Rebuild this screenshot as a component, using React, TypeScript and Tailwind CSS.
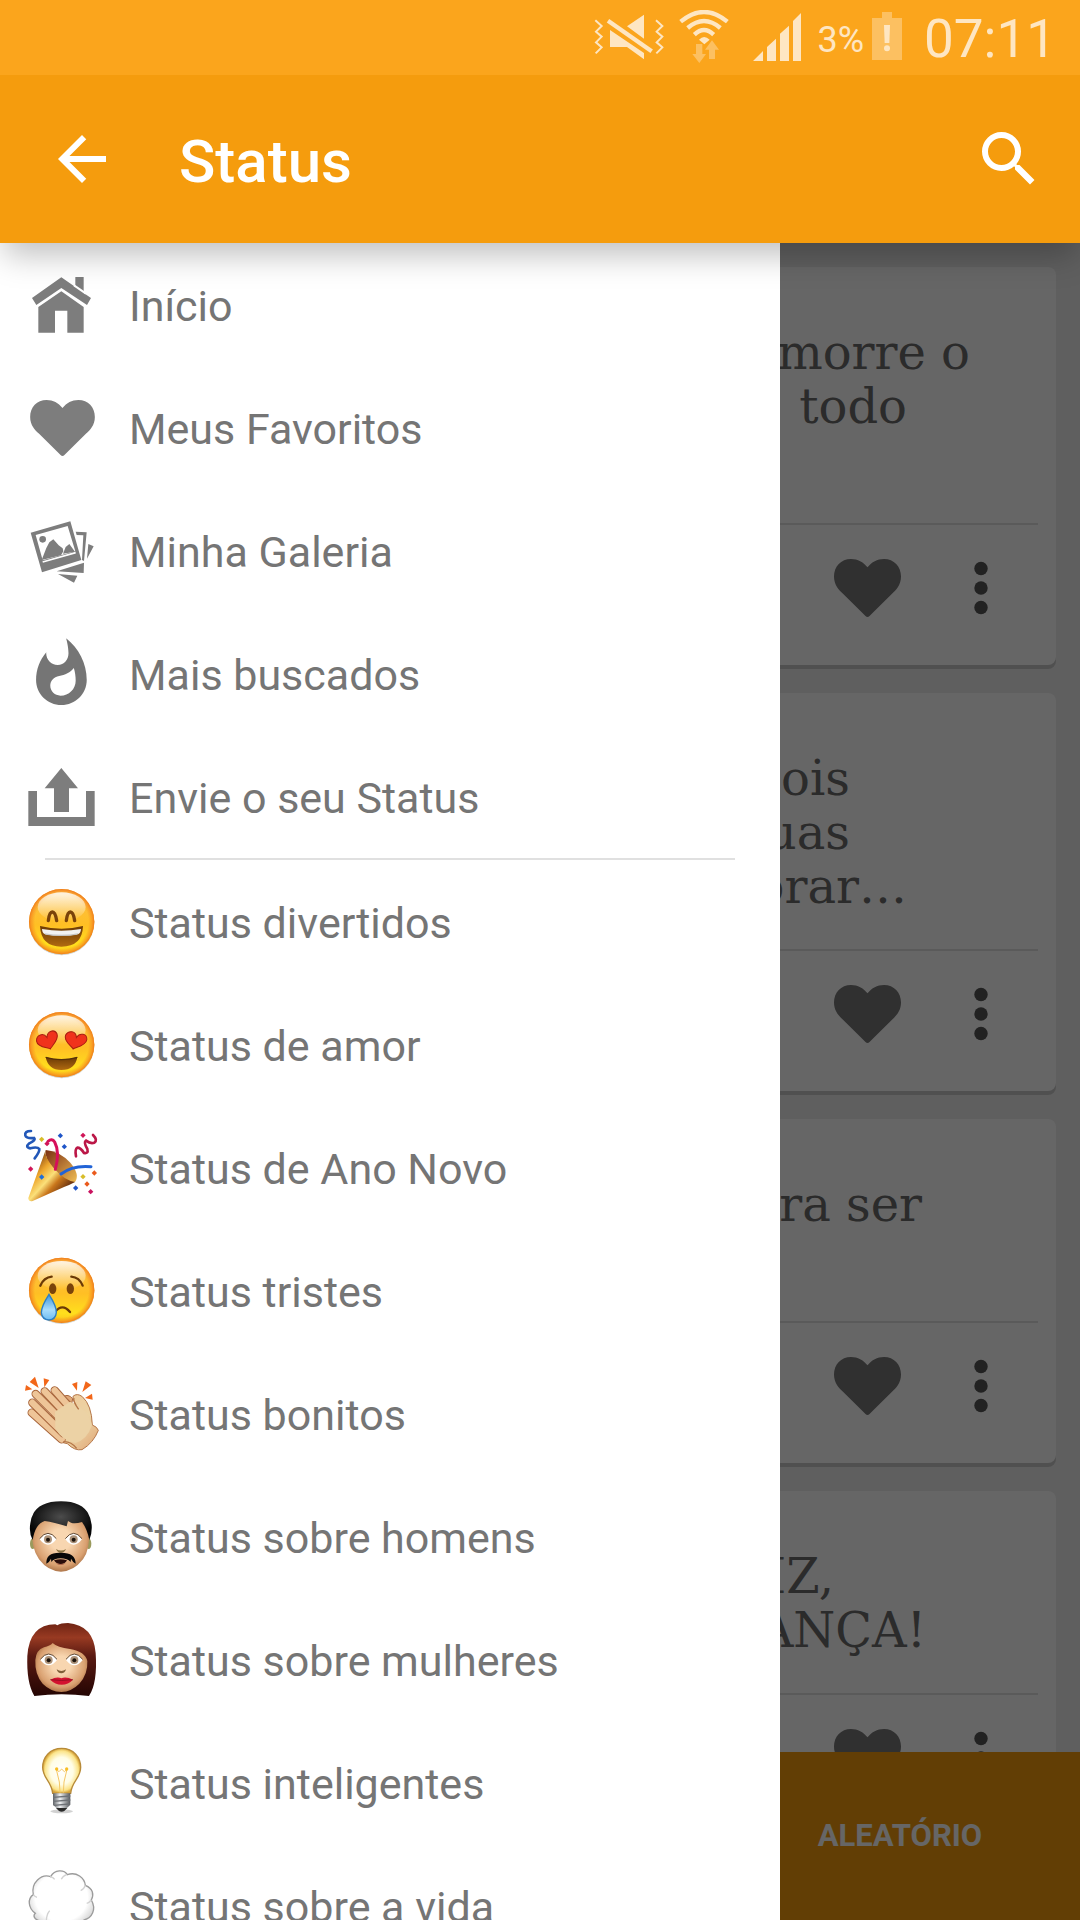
import type { ReactNode } from "react";
import { MdArrowBack, MdSearch } from "react-icons/md";

interface IconProps {
  viewBox: string;
  children: ReactNode;
}

function MenuIcon({ viewBox, children }: IconProps) {
  return (
    <svg viewBox={viewBox} className="h-[83px] w-[84px] shrink-0 text-[#7d7d7d]" fill="currentColor" aria-hidden="true">
      {children}
    </svg>
  );
}

function HeartIcon({ className }: { className: string }) {
  return (
    <svg viewBox="0 0 67 58" className={className} fill="currentColor" aria-hidden="true">
      <path d="M33.5 8.3C29 3 24 0 17 0 7 0 0 7.5 0 17.5 0 26 5 31 9 34.8L31.5 57q2 1.8 4 0L58 34.8C62 31 67 26 67 17.5 67 7.5 60 0 50 0c-7 0-12 3-16.5 8.300z" />
    </svg>
  );
}

function Gradients() {
  return (
    <svg className="absolute size-0" aria-hidden="true">
      <defs>
        <linearGradient id="face" x1="0" y1="0" x2="0" y2="1">
          <stop offset="0" stopColor="#fdc04d" />
          <stop offset="0.55" stopColor="#ffbf24" />
          <stop offset="0.85" stopColor="#ffdf1d" />
          <stop offset="1" stopColor="#fbc31c" />
        </linearGradient>
        <radialGradient id="rim">
          <stop offset="0.82" stopColor="#f5881f" stopOpacity="0" />
          <stop offset="0.93" stopColor="#f5881f" stopOpacity="0.6" />
          <stop offset="1" stopColor="#ee7a1c" />
        </radialGradient>
        <linearGradient id="gloss" x1="0" y1="0" x2="0" y2="1">
          <stop offset="0" stopColor="#fff" stopOpacity="0.85" />
          <stop offset="1" stopColor="#fff" stopOpacity="0" />
        </linearGradient>
        <linearGradient id="mouth" x1="0" y1="0" x2="0" y2="1">
          <stop offset="0" stopColor="#6b3a06" />
          <stop offset="1" stopColor="#b06a10" />
        </linearGradient>
        <linearGradient id="tear" x1="0" y1="0" x2="0" y2="1">
          <stop offset="0" stopColor="#3a93dc" />
          <stop offset="0.6" stopColor="#a8dcfb" />
          <stop offset="1" stopColor="#6fbdf2" />
        </linearGradient>
        <linearGradient id="cone" x1="0" y1="0" x2="1" y2="1">
          <stop offset="0.1" stopColor="#5e2410" />
          <stop offset="0.35" stopColor="#eda52b" />
          <stop offset="0.5" stopColor="#fbe07a" />
          <stop offset="0.62" stopColor="#c9761b" />
          <stop offset="0.85" stopColor="#4a1c0c" />
        </linearGradient>
        <linearGradient id="coneInside" x1="0" y1="0" x2="1" y2="1">
          <stop offset="0" stopColor="#7a2f12" />
          <stop offset="1" stopColor="#f0bd55" />
        </linearGradient>
        <linearGradient id="hand" x1="0" y1="0" x2="1" y2="1">
          <stop offset="0" stopColor="#f0c596" />
          <stop offset="0.6" stopColor="#ecd3a4" />
          <stop offset="1" stopColor="#e0a474" />
        </linearGradient>
        <radialGradient id="skin" cx="0.5" cy="0.45" r="0.6">
          <stop offset="0.3" stopColor="#f8d6b0" />
          <stop offset="0.75" stopColor="#d9a070" />
          <stop offset="1" stopColor="#9a6238" />
        </radialGradient>
        <radialGradient id="blackHair" cx="0.5" cy="0.4" r="0.55">
          <stop offset="0" stopColor="#4c4c4c" />
          <stop offset="1" stopColor="#050505" />
        </radialGradient>
        <linearGradient id="redHair" x1="0" y1="0" x2="0" y2="1">
          <stop offset="0" stopColor="#6f2414" />
          <stop offset="0.2" stopColor="#983a22" />
          <stop offset="0.45" stopColor="#5a1a12" />
          <stop offset="1" stopColor="#240503" />
        </linearGradient>
        <radialGradient id="glow" cx="0.5" cy="0.5" r="0.5">
          <stop offset="0" stopColor="#fff" />
          <stop offset="0.6" stopColor="#fffde6" />
          <stop offset="0.88" stopColor="#fbe48a" />
          <stop offset="1" stopColor="#d9a63c" />
        </radialGradient>
        <linearGradient id="metal" x1="0" y1="0" x2="1" y2="0">
          <stop offset="0" stopColor="#5d6166" />
          <stop offset="0.4" stopColor="#eef0f2" />
          <stop offset="1" stopColor="#55585c" />
        </linearGradient>
        <radialGradient id="cloud" cx="0.5" cy="0.45" r="0.58">
          <stop offset="0.7" stopColor="#fff" />
          <stop offset="1" stopColor="#cfcfcf" />
        </radialGradient>
      </defs>
    </svg>
  );
}

function Face({ cy }: { cy: number }) {
  return (
    <>
      <circle cx="185" cy={cy + 3} r="98" fill="#000" opacity="0.18" />
      <circle cx="185" cy={cy} r="98" fill="url(#face)" />
      <circle cx="185" cy={cy} r="98" fill="url(#rim)" />
      <ellipse cx="185" cy={cy - 44} rx="72" ry="44" fill="url(#gloss)" />
    </>
  );
}

function Eye({ cx, cy }: { cx: number; cy: number }) {
  return (
    <>
      <path d="M-25 0q12-17 25-17t25 17q-12 16-25 16t-25-16z" transform={`translate(${cx} ${cy})`} fill="#fff" />
      <circle cx={cx} cy={cy} r="12" fill="#ab9178" />
      <circle cx={cx} cy={cy + 1} r="6" fill="#1c130c" />
      <path d="M-25-2q12-16 25-16t25 16" transform={`translate(${cx} ${cy})`} fill="none" stroke="#5f4a38" strokeWidth="3" />
    </>
  );
}

const HomeIcon = () => (
  <MenuIcon viewBox="60 609 252 249">
    <path d="M184 652l42 29v-30h25v48l22 15-12 21-77-51-75 51-13-21z" />
    <path d="M222 676l36 25" stroke="#fff" strokeWidth="6" />
    <path d="M184 694l67 47v77h-49v-66h-37v66h-50v-77z" />
  </MenuIcon>
);

const GalleryIcon = () => (
  <MenuIcon viewBox="60 417 252 249">
    <path fillRule="evenodd" d="M92 488l119-34 33 116-118 37zM107 495l21 76 98-27-23-76z" />
    <path d="M128 576l99-28" stroke="#fff" strokeWidth="5" />
    <circle cx="128" cy="508" r="10" />
    <path d="M125 570l14-36 9-17 12-9 16 18 12 9 2 9-7 12zM189 551l8-20 11-9 17 23z" />
    <path d="M227 485l33 2-8 86-6-3 4-74-20-1zM170 604l82-26-1 31zM265 522l16 7-20 37zM174 612l58 5-10 21z" />
  </MenuIcon>
);

const FireIcon = () => (
  <MenuIcon viewBox="60 66 252 249">
    <path
      transform="translate(70.2 78.7) scale(9.5 9.38)"
      fill="#757575"
      d="M13.5.67s.74 2.65.74 4.8c0 2.06-1.35 3.73-3.41 3.73-2.07 0-3.63-1.67-3.63-3.73l.03-.36C5.21 7.51 4 10.62 4 14c0 4.42 3.58 8 8 8s8-3.58 8-8C20 8.61 17.41 3.8 13.5.67zM11.71 19c-1.78 0-3.22-1.4-3.22-3.14 0-1.62 1.05-2.76 2.81-3.12 1.77-.36 3.6-1.21 4.62-2.58.39 1.29.59 2.65.59 4.04 0 2.65-2.15 4.8-4.8 4.8z"
    />
  </MenuIcon>
);

const UploadIcon = () => (
  <MenuIcon viewBox="60 435 252 249">
    <path d="M85 543h26v78h147v-78h26v105H85zM184 474l50 61h-27v71h-45v-71h-28z" />
  </MenuIcon>
);

const GrinIcon = () => (
  <MenuIcon viewBox="60 30 252 249">
    <Face cy={155} />
    <path d="M145 152q3-26 12-26t13 26M199 152q3-26 12-26t13 26" fill="none" stroke="#7a430a" strokeWidth="10" strokeLinecap="round" />
    <path d="M120 168q65 16 129 0-2 62-65 62-61 0-64-62z" fill="url(#mouth)" />
    <path d="M126 177q58 11 117 0-1 13-9 16-50 9-99 0-8-3-9-16z" fill="#f1f1f1" />
    <path d="M133 190q52 9 102 0l-4 4q-46 8-94 0z" fill="#c3c3c3" />
  </MenuIcon>
);

const heartEye = "M0 28C-4 22-36 14-33-6-29-24-6-26 0-8 6-26 28-28 32-10 34 8 8 20 0 28z";

const LoveIcon = () => (
  <MenuIcon viewBox="60 399 252 249">
    <Face cy={524} />
    <g fill="#f0321c" stroke="#a81c10" strokeWidth="3">
      <path d={heartEye} transform="translate(143 510) rotate(-16)" />
      <path d={heartEye} transform="translate(227 510) rotate(16)" />
    </g>
    <path d="M137 562q47 12 95 0-7 38-48 38-39 0-47-38z" fill="url(#mouth)" />
    <path d="M137 562q47 14 95 0" fill="none" stroke="#54300a" strokeWidth="4" />
  </MenuIcon>
);

const confetti = [
  { x: 125, y: 88, color: "#d8bd2a" },
  { x: 141, y: 101, color: "#d01658" },
  { x: 181, y: 77, color: "#1f55c8" },
  { x: 193, y: 110, color: "#1f55c8" },
  { x: 249, y: 76, color: "#d01658" },
  { x: 92, y: 177, color: "#d01658" },
  { x: 125, y: 201, color: "#1f6fd8" },
  { x: 283, y: 189, color: "#ea5a1c" },
  { x: 249, y: 200, color: "#d8bd2a" },
  { x: 261, y: 222, color: "#ea5a1c" },
  { x: 227, y: 234, color: "#1f55c8" },
  { x: 272, y: 245, color: "#c9125f" },
];

const PartyIcon = () => (
  <MenuIcon viewBox="60 48 252 249">
    <path d="M137 120q42 4 74 38 30 36 14 58-24 6-58-30-34-36-30-66z" fill="url(#coneInside)" />
    <path d="M137 120q-4 20 22 52 34 40 66 44-14 8-33 15l-94 42q-12 3-13-9z" fill="url(#cone)" />
    <g fill="none" strokeLinecap="round">
      <path d="M166 178q14-52-2-82-8-12-20-2" stroke="#d60f5a" strokeWidth="9" />
      <path d="M183 192q34-27 90-22" stroke="#2163d6" strokeWidth="9" />
      <path d="M93 63q-20 0-17 13 3 10 26 8 7 6-14 16-14 12 3 15 21-6 27 2 1 9-14 28" stroke="#2257b8" strokeWidth="8" />
      <path d="M279 75q15 15 4 23-12 4-25-6-8 5 4 25 4 15-10 12-10-16-20-16-8 4-4 26" stroke="#bb1747" strokeWidth="8" />
    </g>
    {confetti.map((bit) => (
      <path key={`${bit.x}-${bit.y}`} d="M0-8L8 0 0 8-8 0z" transform={`translate(${bit.x} ${bit.y})`} fill={bit.color} />
    ))}
  </MenuIcon>
);

const CryIcon = () => (
  <MenuIcon viewBox="60 417 252 249">
    <Face cy={541} />
    <ellipse cx="158" cy="536" rx="11" ry="16" fill="#7a430a" />
    <ellipse cx="211" cy="536" rx="11" ry="16" fill="#7a430a" />
    <path d="M121 527q11-25 34-27M214 500q24 2 34 27M165 606q22-28 45 0" fill="none" stroke="#6b3a06" strokeWidth="7" strokeLinecap="round" />
    <path d="M147 553q23 36 22 55-2 21-22 22-21-1-23-22 0-19 23-55z" fill="url(#tear)" stroke="#2c7fc4" strokeWidth="4" />
  </MenuIcon>
);

const fingers = [
  "M95 188L185 268",
  "M97 158L190 250",
  "M107 132L200 225",
  "M134 124L215 210",
  "M164 121L225 190",
];

const ClapIcon = () => (
  <MenuIcon viewBox="60 66 252 249">
    <path d="M75 122l3-17 19 13zM89 96l16-16 11 34zM131 85l17 5-15 22zM216 102l16-6-1 26zM257 94l17 11-27 21zM255 144l21-13 2 18z" fill="#f2671a" />
    <path d="M190 140q14-10 28 6l-4 22-20-10z" fill="#e0a878" stroke="#a9683e" strokeWidth="3" />
    <path d="M140 225q30 55 62 56 22 22 44 18 34-20 49-58-4-11-18-16-2-60-30-85-16-12-28-1-2 10 14 34l-50-40z" fill="url(#hand)" stroke="#b57648" strokeWidth="3" />
    {fingers.map((finger) => (
      <g key={finger} fill="none" strokeLinecap="round">
        <path d={finger} stroke="#a9663c" strokeWidth="25" />
        <path d={finger} stroke="#eec598" strokeWidth="19" />
      </g>
    ))}
    <path d="M165 185l45-30q54 20 66 70-14 44-50 54-40-6-60-44z" fill="#ecd2a5" />
    <path d="M222 144q-4 10 14 34M190 275q22-2 40 20" fill="none" stroke="#b57648" strokeWidth="4" />
  </MenuIcon>
);

const ManIcon = () => (
  <MenuIcon viewBox="60 435 252 249">
    <ellipse cx="98" cy="581" rx="8" ry="16" fill="#9a9a5c" />
    <ellipse cx="266" cy="581" rx="8" ry="16" fill="#9a9a5c" />
    <path d="M97 540q0-50 86-50t84 50q4 58-18 88-28 36-66 37-39-1-66-37-24-34-20-88z" fill="url(#skin)" />
    <path d="M98 570q-12-22-7-50 8-66 92-66t92 70q2 26-7 46-6-32-22-54-21 6-33 2l-9-5-4 16q-38-12-66-16-28 8-36 57z" fill="url(#blackHair)" />
    <Eye cx={144} cy={568} />
    <Eye cx={221} cy={568} />
    <path d="M168 597q15 9 30 0-4 11-15 11t-15-11z" fill="#8a7342" />
    <path d="M139 641q-2-34 42-33 46-1 46 33-9-5-14-15l-1 10q-10-11-30-11t-28 11l-1-10q-4 10-14 15z" fill="#080808" />
    <path d="M162 631q20-7 39 0-5 11-19 11t-20-11z" fill="#2a0d0a" />
    <path d="M167 639q15 7 30 0-6 6-15 6t-15-6z" fill="#a55a44" />
  </MenuIcon>
);

const WomanIcon = () => (
  <MenuIcon viewBox="60 54 252 249">
    <path d="M103 288q-24-40-21-120 6-94 84-95l6 3q10-7 32-7 76 6 83 90 6 90-20 129-83-10-164 0z" fill="url(#redHair)" />
    <path d="M106 180q2-30 26-38 18-4 26-13 14 14 52 18 46 8 52 36 2 40-24 68-24 24-54 25-32-1-56-25-24-28-22-71z" fill="url(#skin)" />
    <Eye cx={146} cy={180} />
    <Eye cx={223} cy={180} />
    <path d="M170 208q14 10 28 0-3 12-14 12t-14-12z" fill="#7f5f38" />
    <path d="M151 239q20-10 33-4 14-6 35 4-14 15-34 15t-34-15z" fill="#d3122f" />
    <path d="M151 239q34 5 68 0" fill="none" stroke="#7d0a1c" strokeWidth="2" />
  </MenuIcon>
);

const BulbIcon = () => (
  <MenuIcon viewBox="60 423 252 249">
    <ellipse cx="185" cy="634" rx="34" ry="6" fill="#000" opacity="0.18" />
    <path d="M185 445c36 0 57 27 57 57 0 34-26 40-30 78h-54c-4-38-30-44-30-78 0-30 21-57 57-57z" fill="url(#glow)" stroke="#b78a38" strokeWidth="4" />
    <path d="M180 578l-2-32-9-38 8 7 8-8 8 8 8-7-9 38-2 32" fill="none" stroke="#f5c866" strokeWidth="3" />
    <circle cx="170" cy="507" r="5" fill="#f8bd24" />
    <circle cx="200" cy="507" r="5" fill="#f8bd24" />
    <path d="M159 580h52v34l-14 14-12 7-12-7-14-14z" fill="url(#metal)" />
    <path d="M159 592l52-4M159 604l52-4M161 616l48-4" stroke="#6d7176" strokeWidth="4" />
    <path d="M168 624h34l-9 9q-8 4-16 0z" fill="#2b2b2b" />
  </MenuIcon>
);

const CloudIcon = () => (
  <MenuIcon viewBox="60 792 252 249">
    <path
      d="M100 884c-8-36 24-64 52-54 12-22 40-22 50-6 28-10 52 10 54 32 24 10 26 28 18 44 16 28 2 54-22 60-8 30-40 36-60 20-24 16-56 4-60-18-24 4-36-12-26-22-22-16-24-44-6-56z"
      fill="url(#cloud)"
      stroke="#9b9b9b"
      strokeWidth="4"
    />
    <path d="M100 884q4 6 11 8M256 856q-4 12-14 16M200 824q-12 4-16 14M150 830q10 2 14 8M139 964q0-20 10-32M274 900q-6 8-14 10" fill="none" stroke="#d2d2d2" strokeWidth="4" />
  </MenuIcon>
);

const mainItems = [
  { label: "Início", icon: <HomeIcon /> },
  {
    label: "Meus Favoritos",
    icon: (
      <span className="flex w-[84px] shrink-0 justify-center text-[#7d7d7d]">
        <HeartIcon className="h-14 w-[65px]" />
      </span>
    ),
  },
  { label: "Minha Galeria", icon: <GalleryIcon /> },
  { label: "Mais buscados", icon: <FireIcon /> },
  { label: "Envie o seu Status", icon: <UploadIcon /> },
];

const categoryItems = [
  { label: "Status divertidos", icon: <GrinIcon /> },
  { label: "Status de amor", icon: <LoveIcon /> },
  { label: "Status de Ano Novo", icon: <PartyIcon /> },
  { label: "Status tristes", icon: <CryIcon /> },
  { label: "Status bonitos", icon: <ClapIcon /> },
  { label: "Status sobre homens", icon: <ManIcon /> },
  { label: "Status sobre mulheres", icon: <WomanIcon /> },
  { label: "Status inteligentes", icon: <BulbIcon /> },
  { label: "Status sobre a vida", icon: <CloudIcon /> },
];

const posts = [
  {
    id: 1,
    height: "h-64",
    lines: [
      { text: "morre o", inset: "pr-[86px]" },
      { text: "todo", inset: "pr-[149px]" },
    ],
  },
  {
    id: 2,
    height: "h-64",
    lines: [
      { text: "depois", inset: "pr-[206px]" },
      { text: "suas", inset: "pr-[206px]" },
      { text: "chorar…", inset: "pr-[149px]" },
    ],
  },
  {
    id: 3,
    height: "h-[202px]",
    lines: [{ text: "para ser", inset: "pr-[134px]" }],
  },
  {
    id: 4,
    height: "h-[202px]",
    lines: [
      { text: "FELIZ,", inset: "pr-[222px]" },
      { text: "MUDANÇA!", inset: "pr-[130px]" },
    ],
  },
];

function StatusBar() {
  return (
    <div className="flex h-[75px] items-center justify-end bg-[#fba51c] pr-6 text-[#fee6c2]">
      <svg viewBox="102 30 213 165" className="mr-3.5 h-[55px] w-[71px]" aria-hidden="true">
        <path d="M106 61l19 17-17 17 17 15-17 17 17 15-18 18M288 61l19 17-17 17 17 15-17 17 17 15-18 18" fill="none" stroke="currentColor" strokeWidth="6" />
        <path d="M252 44v72l-51-37zM150 90l102 69v19l-51-37h-51z" fill="currentColor" />
        <path d="M144 62l131 92" stroke="currentColor" strokeWidth="13" />
      </svg>
      <svg viewBox="357 30 150 165" className="mr-6 h-[55px] w-[50px]" aria-hidden="true">
        <path d="M362 65q70-58 140 0M383 84q49-42 98 0M403 104q29-28 58 0" fill="none" stroke="currentColor" strokeWidth="13" />
        <path d="M417 119q15-16 32 0l-16 14z" fill="currentColor" />
        <path d="M408 132h19v30h11l-20 27-21-27h11zM447 177v-28h-12l21-28 21 28h-12v28z" fill="#fcc061" />
      </svg>
      <svg viewBox="576 30 144 165" className="mr-4 h-[55px] w-12" fill="currentColor" aria-hidden="true">
        <path d="M606 153v30h-30zM618 141l27-25v67h-27zM657 101l27-24v106h-27zM696 63l24-24v144h-24z" />
      </svg>
      <span className="pt-1 text-[36px] leading-none">3%</span>
      <svg viewBox="939 30 90 165" className="mr-[22px] ml-2 h-[55px] w-[30px]" aria-hidden="true">
        <path d="M969 36h30v18h30v126h-90V54h30z" fill="#fcc061" />
        <path d="M975 75h18l-2 54h-14z" fill="currentColor" />
        <circle cx="984" cy="145" r="9" fill="currentColor" />
      </svg>
      <span className="pt-1 text-[53px] leading-none">07:11</span>
    </div>
  );
}

interface DrawerItemProps {
  label: string;
  icon: ReactNode;
}

function DrawerItem({ label, icon }: DrawerItemProps) {
  return (
    <li>
      <a href="#" className="flex h-[123px] items-center gap-[25px] pl-5 text-[43px] text-[#757575]">
        {icon}
        <span className="pt-1 whitespace-nowrap">{label}</span>
      </a>
    </li>
  );
}

export default function App() {
  return (
    <div className="flex h-screen flex-col overflow-hidden bg-[#eeeeee] font-['Roboto',sans-serif]">
      <Gradients />
      <header className="z-10 shrink-0 bg-[#f59c0d] text-white shadow-[0_16px_30px_-4px_rgba(0,0,0,0.25)]">
        <StatusBar />
        <div className="flex h-42 items-center pr-[35px] pl-[46px]">
          <button type="button" aria-label="Voltar">
            <MdArrowBack className="size-[72px]" />
          </button>
          <h1 className="ml-[61px] flex-1 pt-1.5 text-[60px] leading-none font-medium">Status</h1>
          <button type="button" aria-label="Buscar">
            <MdSearch className="size-[72px]" />
          </button>
        </div>
      </header>

      <div className="relative flex min-h-0 flex-1 flex-col">
        {/* Feed */}
        <main className="flex min-h-0 flex-1 flex-col gap-7 overflow-hidden p-6">
          {posts.map((post) => (
            <article key={post.id} className="shrink-0 rounded-lg bg-white shadow-[0_4px_0_#c8c8c8]">
              <div className={`${post.height} pt-[58px] text-right font-['DejaVu_Serif',serif] text-[48px] leading-[54px] text-[#6b6b6b]`}>
                {post.lines.map((line) => (
                  <p key={line.text} className={line.inset}>
                    {line.text}
                  </p>
                ))}
              </div>
              <hr className="mx-[18px] border-t-2 border-[#e1e1e1]" />
              <div className="flex items-center justify-end gap-[73px] pt-[34px] pr-[68px] pb-12">
                <button type="button" aria-label="Favoritar" className="text-[#787878]">
                  <HeartIcon className="h-[58px] w-[67px]" />
                </button>
                <button type="button" aria-label="Mais opções" className="text-[#555555]">
                  <svg viewBox="0 0 14 54" className="h-[54px] w-3.5" fill="currentColor" aria-hidden="true">
                    <circle cx="7" cy="7.5" r="6.7" />
                    <circle cx="7" cy="27" r="6.7" />
                    <circle cx="7" cy="46.5" r="6.7" />
                  </svg>
                </button>
              </div>
            </article>
          ))}
        </main>

        <footer className="grid h-42 shrink-0 grid-cols-3 bg-[#f59c0d] text-[31px] font-bold text-white">
          <button type="button">NOVOS</button>
          <button type="button">POPULARES</button>
          <button type="button">ALEATÓRIO</button>
        </footer>

        {/* Drawer over the feed */}
        <div className="absolute inset-0 bg-black/60" />
        <nav className="absolute inset-y-0 left-0 w-[780px] max-w-full overflow-y-auto bg-white [scrollbar-width:none]">
          <ul>
            {mainItems.map((item) => (
              <DrawerItem key={item.label} label={item.label} icon={item.icon} />
            ))}
          </ul>
          <hr className="mx-[45px] border-t-2 border-[#e0e0e0]" />
          <ul>
            {categoryItems.map((item) => (
              <DrawerItem key={item.label} label={item.label} icon={item.icon} />
            ))}
          </ul>
        </nav>
      </div>
    </div>
  );
}
